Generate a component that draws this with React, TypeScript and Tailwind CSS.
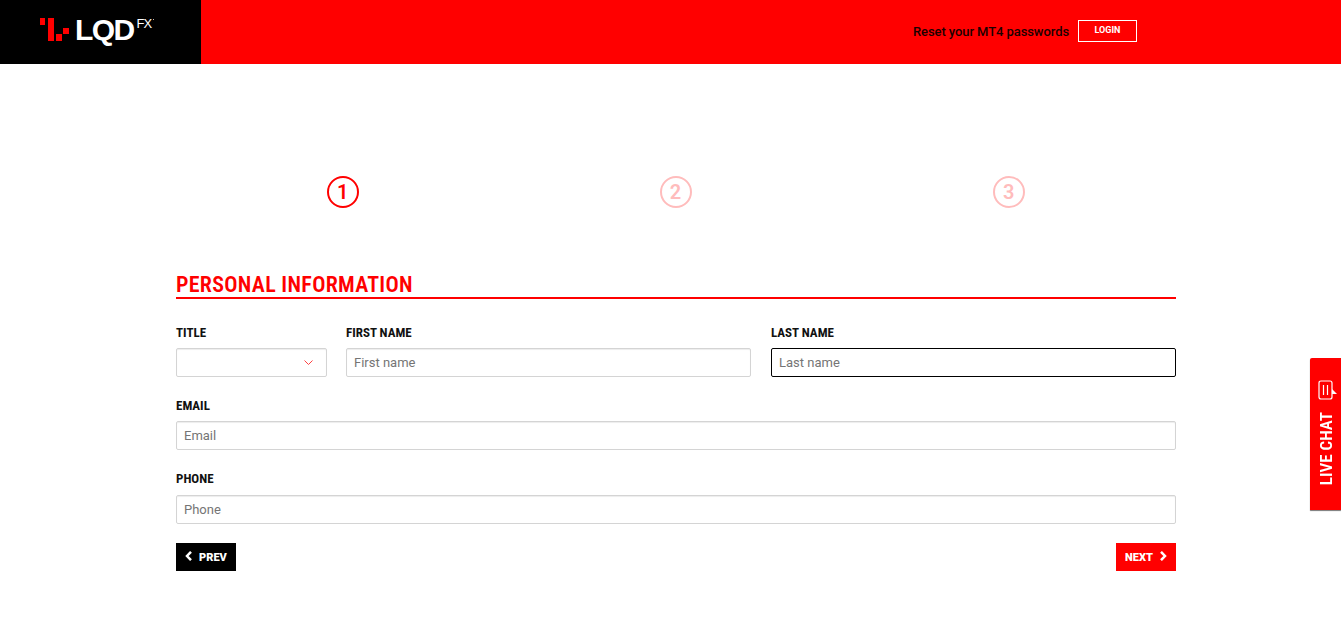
import React from "react";

const roboto = "font-['Roboto',sans-serif]";
const inputCls =
  "h-[29px] w-full rounded-[2px] border border-[#d4d4d4] bg-white px-[7px] text-[13px] text-[#333] shadow-[inset_0_1px_1px_rgba(0,0,0,0.075)] outline-none placeholder:text-[#757575] font-['Roboto',sans-serif]";

function Label({ children }: { children: React.ReactNode }) {
  return (
    <label className="mb-[7px] block h-[15px] text-[13px] leading-[13px] font-bold text-[#111] [font-stretch:75%] font-['Roboto',sans-serif]">
      {children}
    </label>
  );
}

function Step({ n, active }: { n: number; active?: boolean }) {
  return (
    <div className="flex justify-center">
      <div
        className={
          active
            ? "flex h-[32px] w-[32px] items-center justify-center rounded-full border-2 border-[#ff0000] text-[20px] font-semibold text-[#ff0000]"
            : "flex h-[32px] w-[32px] items-center justify-center rounded-full border-2 border-[#ffbcbc] pr-[1px] text-[20px] font-semibold text-[#ffbcbc]"
        }
      >
        {n}
      </div>
    </div>
  );
}

export default function App() {
  return (
    <div className={`relative h-[622px] overflow-hidden bg-white ${roboto}`}>
      <header className="flex h-[64px] bg-[#ff0000]">
        <div className="flex h-full w-[201px] items-center bg-black pl-[40px]">
          <svg width="30" height="24" viewBox="0 0 30 24" className="mt-[-4px] block shrink-0">
            <rect x="0" y="0" width="5" height="7" fill="#ff0000" />
            <rect x="8" y="0" width="6" height="23" fill="#ff0000" />
            <rect x="16" y="16" width="6" height="7" fill="#ff0000" />
            <rect x="23" y="10" width="6" height="6" fill="#ff0000" />
          </svg>
          <span className="ml-[5px] mt-[-4px] text-[30px] leading-none font-bold tracking-[-1.6px] text-white font-['Liberation_Sans',sans-serif]">
            LQD
          </span>
          <span className="ml-[3px] mb-[18px] text-[13px] leading-none tracking-[-1px] text-white font-['Liberation_Sans',sans-serif]">
            FX
          </span>
          <span className="ml-[2px] mb-[25px] h-[1px] w-[1px] bg-[#bbbbbb]" />
        </div>
        <div className="flex flex-1 items-center justify-end pr-[204px]">
          <span className="mr-[9px] mt-[-1px] text-[13px] tracking-[-0.08px] font-medium text-[#1a0000]">Reset your MT4 passwords</span>
          <button className="mt-[-2px] h-[22px] w-[59px] border border-white text-[9px] font-bold text-white">
            LOGIN
          </button>
        </div>
      </header>

      <main className="ml-[176px] w-[1000px] pt-[112px]">
        <div className="grid grid-cols-3">
          <Step n={1} active />
          <Step n={2} />
          <Step n={3} />
        </div>

        <h2 className="mt-[64px] border-b-2 border-[#ff0000] text-[22px] leading-[25px] font-semibold tracking-[0.3px] text-[#ff0000] [font-stretch:75%]">
          PERSONAL INFORMATION
        </h2>

        <form className="mt-[27px]">
          <div className="grid grid-cols-[151px_405px_406px] gap-x-[19px]">
            <div>
              <Label>TITLE</Label>
              <div className="relative h-[29px] rounded-[2px] border border-[#d4d4d4] bg-white shadow-[inset_0_1px_1px_rgba(0,0,0,0.075)]">
                <svg
                  width="9"
                  height="6"
                  viewBox="0 0 9 6"
                  fill="none"
                  stroke="#ff4040"
                  strokeWidth="1"
                  className="absolute top-[11px] right-[13px]"
                >
                  <path d="M0.5 0.5 L4.5 4.5 L8.5 0.5" />
                </svg>
              </div>
            </div>
            <div>
              <Label>FIRST NAME</Label>
              <input className={inputCls} placeholder="First name" />
            </div>
            <div className="ml-[1px]">
              <Label>LAST NAME</Label>
              <input
                className="h-[29px] w-full rounded-[2px] border border-black bg-white px-[7px] text-[13px] outline-none placeholder:text-[#757575]"
                placeholder="Last name"
              />
            </div>
          </div>

          <div className="mt-[22px]">
            <Label>EMAIL</Label>
            <input className={inputCls} placeholder="Email" />
          </div>
          <div className="mt-[22px]">
            <Label>PHONE</Label>
            <input className={`${inputCls} mt-[1px]`} placeholder="Phone" />
          </div>

          <div className="mt-[19px] flex justify-between">
            <button type="button" className="flex h-[28px] w-[60px] items-center justify-center gap-[6px] bg-black pt-[2px] text-[11px] font-black text-white">
              <svg width="8" height="10" viewBox="0 0 8 10" fill="none" stroke="white" strokeWidth="2.5" className="mt-[-4px]">
                <path d="M6 0.8 L2 5 L6 9.2" />
              </svg>
              PREV
            </button>
            <button type="button" className="flex h-[28px] w-[60px] items-center justify-center gap-[6px] bg-[#ff0000] pt-[2px] text-[11px] font-black text-white">
              NEXT
              <svg width="8" height="10" viewBox="0 0 8 10" fill="none" stroke="white" strokeWidth="2.5" className="mt-[-4px]">
                <path d="M2 0.8 L6 5 L2 9.2" />
              </svg>
            </button>
          </div>
        </form>
      </main>

      <div className="fixed top-[358px] right-0 flex h-[152px] w-[31px] flex-col items-center rounded-tl-[2px] bg-[#ff0000] pt-[22px] shadow-[0_1px_1px_#777]">
        <svg width="19" height="20" viewBox="0 0 19 20" fill="none" stroke="white" strokeWidth="1.2" className="ml-[3px]">
          <path d="M3 1 H12 Q14 1 14 3 V9 L14 13 V17 Q14 19 12 19 H3 Q1 19 1 17 V3 Q1 1 3 1 Z" />
          <path d="M14 9 L19 14 L14 14 Z" fill="white" stroke="none" />
          <path d="M5.5 5 V15 M9.5 5 V15" />
        </svg>
        <span className="mt-[12px] text-[17px] leading-[20px] font-semibold whitespace-nowrap text-white [font-stretch:75%] [writing-mode:vertical-rl] rotate-180">
          LIVE CHAT
        </span>
      </div>
    </div>
  );
}
